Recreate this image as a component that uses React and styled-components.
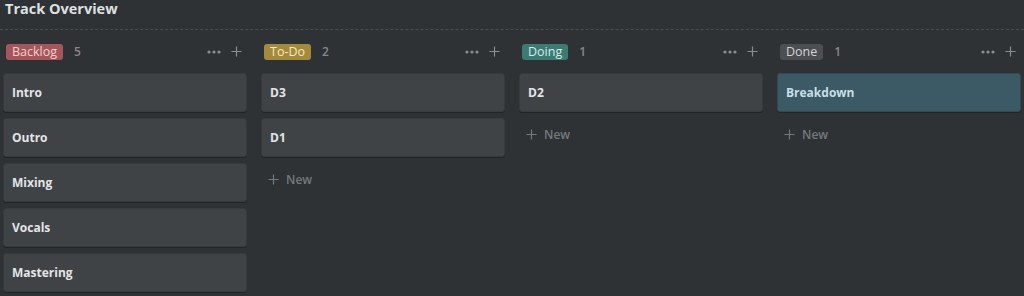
import React from "react";
import styled, { createGlobalStyle } from "styled-components";

const Global = createGlobalStyle`
  html, body { margin: 0; padding: 0; background: #2e3235; }
  body { font-family: "Open Sans", "Noto Sans", sans-serif; }
`;

const Page = styled.div`
  width: 1024px;
  height: 296px;
  overflow: hidden;
  background: #2e3235;
  box-sizing: border-box;
`;

const Title = styled.h1`
  margin: 0;
  padding: 0 0 0 5px;
  height: 29px;
  line-height: 18px;
  font-size: 14.5px;
  font-weight: 700;
  color: #dfe1e2;
  border-bottom: 1px dashed #4a4e52;
`;

const Board = styled.div`
  display: grid;
  grid-template-columns: repeat(4, 1fr);
  column-gap: 14px;
  padding: 0 3px;
`;

const Column = styled.div`
  display: flex;
  flex-direction: column;
`;

const Header = styled.div`
  display: flex;
  align-items: center;
  height: 43px;
  padding: 0 5px 0 3px;
  box-sizing: border-box;
`;

const tagColors = {
  red: { bg: "#a5565a", fg: "#f3cfd0" },
  yellow: { bg: "#a38a3c", fg: "#f6e8bf" },
  green: { bg: "#3d7a73", fg: "#d3ede9" },
  gray: { bg: "#4b4f52", fg: "#d2d4d5" },
};

const Tag = styled.span`
  display: inline-flex;
  align-items: center;
  height: 16px;
  padding: 0 6px;
  border-radius: 3px;
  font-size: 12.5px;
  background: ${(p) => tagColors[p.$color].bg};
  color: ${(p) => tagColors[p.$color].fg};
`;

const Count = styled.span`
  margin-left: 11px;
  font-size: 12px;
  font-weight: 600;
  color: #85898c;
`;

const Actions = styled.div`
  margin-left: auto;
  display: flex;
  align-items: center;
  gap: 10px;
  color: #8a8e91;
`;

const Cards = styled.div`
  display: flex;
  flex-direction: column;
  gap: 6px;
`;

const Card = styled.div`
  height: 39px;
  box-sizing: border-box;
  display: flex;
  align-items: center;
  padding: 0 8px;
  border-radius: 3px;
  border: 1px solid ${(p) => (p.$done ? "#334a52" : "#363a3d")};
  background: ${(p) => (p.$done ? "#3c5a65" : "#3f4346")};
  color: ${(p) => (p.$done ? "#c9dfe5" : "#e4e5e6")};
  font-size: 12px;
  font-weight: 700;
  box-shadow: 0 1px 0 rgba(0, 0, 0, 0.25);
`;

const NewRow = styled.div`
  display: flex;
  align-items: center;
  gap: 7px;
  height: 28px;
  margin-top: 8px;
  padding-left: 7px;
  font-size: 12px;
  font-weight: 600;
  color: #75797c;
`;

const Dots = () => (
  <svg width="14" height="4" viewBox="0 0 14 4">
    <circle cx="2" cy="2" r="1.6" fill="currentColor" />
    <circle cx="7" cy="2" r="1.6" fill="currentColor" />
    <circle cx="12" cy="2" r="1.6" fill="currentColor" />
  </svg>
);

const Plus = ({ size = 11 }) => (
  <svg width={size} height={size} viewBox="0 0 12 12">
    <path d="M6 0.5V11.5M0.5 6H11.5" stroke="currentColor" strokeWidth="1.3" />
  </svg>
);

const columns = [
  { name: "Backlog", color: "red", items: ["Intro", "Outro", "Mixing", "Vocals", "Mastering"], showNew: false },
  { name: "To-Do", color: "yellow", items: ["D3", "D1"], showNew: true },
  { name: "Doing", color: "green", items: ["D2"], showNew: true },
  { name: "Done", color: "gray", items: ["Breakdown"], showNew: true, done: true },
];

export default function App() {
  return (
    <Page>
      <Global />
      <Title>Track Overview</Title>
      <Board>
        {columns.map((c) => (
          <Column key={c.name}>
            <Header>
              <Tag $color={c.color}>{c.name}</Tag>
              <Count>{c.items.length}</Count>
              <Actions>
                <Dots />
                <Plus />
              </Actions>
            </Header>
            <Cards>
              {c.items.map((it) => (
                <Card key={it} $done={c.done}>{it}</Card>
              ))}
            </Cards>
            {c.showNew && (
              <NewRow>
                <Plus size={11} />
                New
              </NewRow>
            )}
          </Column>
        ))}
      </Board>
    </Page>
  );
}
